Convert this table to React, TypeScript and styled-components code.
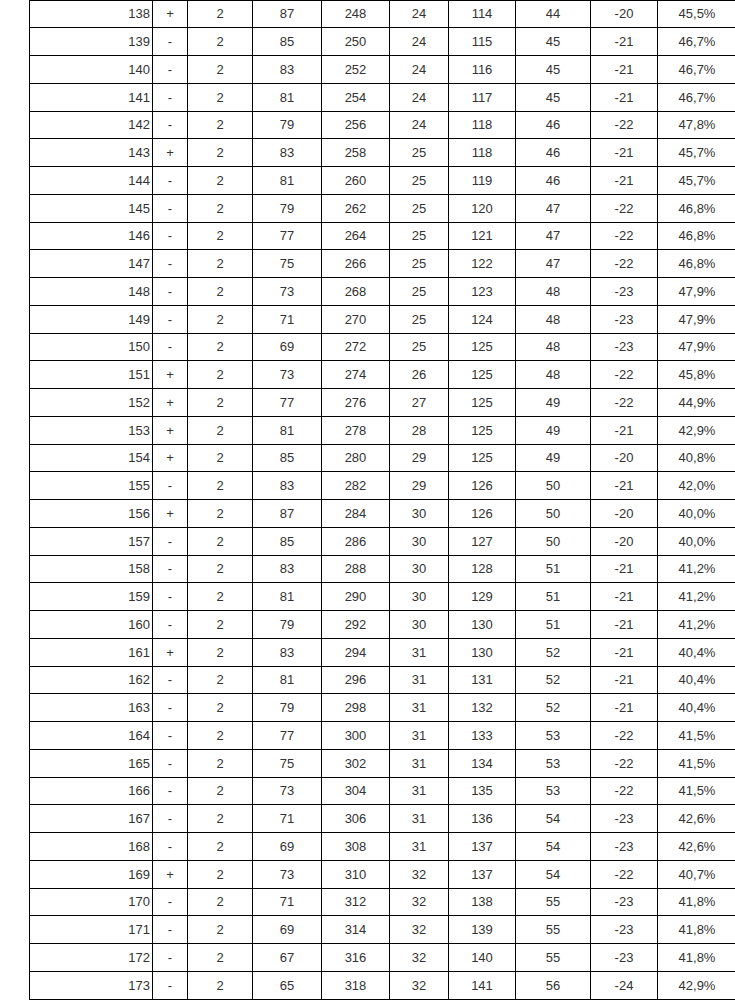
import styled, { createGlobalStyle } from 'styled-components'

const GlobalStyle = createGlobalStyle`
  html, body {
    margin: 0;
    padding: 0;
    background: #fff;
    overflow: hidden;
  }
`

const rows = `138 + 2 87 248 24 114 44 -20 45,5%
139 - 2 85 250 24 115 45 -21 46,7%
140 - 2 83 252 24 116 45 -21 46,7%
141 - 2 81 254 24 117 45 -21 46,7%
142 - 2 79 256 24 118 46 -22 47,8%
143 + 2 83 258 25 118 46 -21 45,7%
144 - 2 81 260 25 119 46 -21 45,7%
145 - 2 79 262 25 120 47 -22 46,8%
146 - 2 77 264 25 121 47 -22 46,8%
147 - 2 75 266 25 122 47 -22 46,8%
148 - 2 73 268 25 123 48 -23 47,9%
149 - 2 71 270 25 124 48 -23 47,9%
150 - 2 69 272 25 125 48 -23 47,9%
151 + 2 73 274 26 125 48 -22 45,8%
152 + 2 77 276 27 125 49 -22 44,9%
153 + 2 81 278 28 125 49 -21 42,9%
154 + 2 85 280 29 125 49 -20 40,8%
155 - 2 83 282 29 126 50 -21 42,0%
156 + 2 87 284 30 126 50 -20 40,0%
157 - 2 85 286 30 127 50 -20 40,0%
158 - 2 83 288 30 128 51 -21 41,2%
159 - 2 81 290 30 129 51 -21 41,2%
160 - 2 79 292 30 130 51 -21 41,2%
161 + 2 83 294 31 130 52 -21 40,4%
162 - 2 81 296 31 131 52 -21 40,4%
163 - 2 79 298 31 132 52 -21 40,4%
164 - 2 77 300 31 133 53 -22 41,5%
165 - 2 75 302 31 134 53 -22 41,5%
166 - 2 73 304 31 135 53 -22 41,5%
167 - 2 71 306 31 136 54 -23 42,6%
168 - 2 69 308 31 137 54 -23 42,6%
169 + 2 73 310 32 137 54 -22 40,7%
170 - 2 71 312 32 138 55 -23 41,8%
171 - 2 69 314 32 139 55 -23 41,8%
172 - 2 67 316 32 140 55 -23 41,8%
173 - 2 65 318 32 141 56 -24 42,9%`
  .split('\n')
  .map((line) => line.split(' '))

// border-to-border widths measured from the screenshot
const colWidths = [123, 35, 65, 69, 68, 59, 67, 75, 67, 79]

const Page = styled.div`
  padding-left: 29px;
  margin-top: -0.5px;
`

const Table = styled.table`
  border-collapse: collapse;
  table-layout: fixed;
  width: 707px;
  font-family: 'Liberation Sans', Arial, sans-serif;
  font-size: 13px;
  color: #333;
`

const Row = styled.tr`
  height: 27.75px;
`

const Cell = styled.td<{ $right?: boolean }>`
  border: 1px solid #000;
  padding: 0 ${({ $right }) => ($right ? '2px' : '0')} 0 0;
  text-align: ${({ $right }) => ($right ? 'right' : 'center')};
  vertical-align: middle;
  white-space: nowrap;
`

const App = () => {
  return (
    <>
      <GlobalStyle />
      <Page>
        <Table>
          <colgroup>
            {colWidths.map((w, i) => (
              <col key={i} style={{ width: w }} />
            ))}
          </colgroup>
          <tbody>
            {rows.map((row) => (
              <Row key={row[0]}>
                {row.map((val, i) => (
                  <Cell key={i} $right={i === 0}>
                    {val}
                  </Cell>
                ))}
              </Row>
            ))}
          </tbody>
        </Table>
      </Page>
    </>
  )
}

export default App
